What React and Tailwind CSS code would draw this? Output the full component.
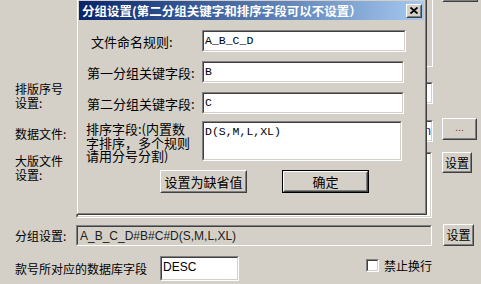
import React from "react";

const Sunken = ({ className = "", inner = "bg-white", children }) => (
    <div className={`border border-t-[#808080] border-l-[#808080] border-b-white border-r-white ${className}`}>
        <div className={`h-full w-full border border-t-[#404040] border-l-[#404040] border-b-[#d4d0c8] border-r-[#d4d0c8] overflow-hidden ${inner}`}>
            {children}
        </div>
    </div>
);

const Btn = ({ className = "", children }) => (
    <div className={`border border-t-white border-l-white border-b-[#404040] border-r-[#404040] bg-[#d4d0c8] ${className}`}>
        <div className="h-full w-full border border-t-[#d4d0c8] border-l-[#d4d0c8] border-b-[#808080] border-r-[#808080] flex items-center justify-center">
            {children}
        </div>
    </div>
);

const Field = ({ label, labelPad, width, value, rowClass }) => (
    <div className={`flex items-center h-[22px] ${rowClass}`}>
        <div className={`w-[123px] ${labelPad} leading-[13px]`}>{label}</div>
        <Sunken className={`${width} h-[22px]`}>
            <div className="h-full flex items-center pl-[1px] font-['Liberation_Mono',monospace] text-[11.5px]">{value}</div>
        </Sunken>
    </div>
);

const GroupDialog = () => (
    <div className="absolute left-[76px] top-[-2px] w-[351px] h-[217px] border border-t-[#d4d0c8] border-l-[#d4d0c8] border-b-[#404040] border-r-[#404040] bg-[#d4d0c8]">
        <div className="h-full w-full border border-t-white border-l-white border-b-[#808080] border-r-[#808080] p-[1px] text-[13px]">
            {/* title bar */}
            <div className="h-[19px] flex items-center justify-between bg-linear-to-r from-[#0a246a] to-[#a6caf0]">
                <div className="pl-[3px] text-white font-bold text-[12.5px] leading-[19px] whitespace-nowrap">分组设置(第二分组关键字和排序字段可以不设置）</div>
                <Btn className="w-[16px] h-[14px] mr-[2px]">
                    <svg width="8" height="7" viewBox="0 0 8 7">
                        <path d="M0.5 0.5 L7.5 6.5 M7.5 0.5 L0.5 6.5" stroke="#000" strokeWidth="1.8" fill="none" />
                    </svg>
                </Btn>
            </div>

            <Field label="文件命名规则:" labelPad="pl-[12px]" width="w-[204px]" value="A_B_C_D" rowClass="mt-[10px]" />
            <Field label="第一分组关键字段:" labelPad="pl-[8px]" width="w-[202px]" value="B" rowClass="mt-[9px]" />
            <Field label="第二分组关键字段:" labelPad="pl-[8px]" width="w-[202px]" value="C" rowClass="mt-[9px]" />

            <div className="flex mt-[7px] h-[40px]">
                <div className="w-[123px] pl-[7px] pt-[1px] leading-[13.5px] whitespace-nowrap">
                    排序字段:(内置数<br />字排序，多个规则<br />请用分号分割)
                </div>
                <Sunken className="w-[200px] h-[40px]">
                    <div className="pl-[1px] pt-[2px] font-['Liberation_Mono',monospace] text-[11.5px] leading-[13px]">D(S,M,L,XL)</div>
                </Sunken>
            </div>

            <div className="flex mt-[9px]">
                <Btn className="ml-[81px] w-[87px] h-[23px]">设置为缺省值</Btn>
                <div className="ml-[35px] w-[87px] h-[23px] border border-black">
                    <Btn className="w-full h-full">确定</Btn>
                </div>
            </div>
        </div>
    </div>
);

const App = () => {
    return (
        <div className="relative w-[481px] h-[284px] overflow-hidden bg-[#d4d0c8] text-black text-[12px] font-['Noto_Sans_CJK_SC','Liberation_Sans',sans-serif]">
            <div className="flex flex-col">
                {/* top edit + button */}
                <div className="flex h-[67px]">
                    <div className="w-[76px]" />
                    <div className="w-[357px] h-[67px] border-r border-b border-white">
                        <div className="h-full w-full border-r border-b border-[#d4d0c8]" />
                    </div>
                    <Btn className="ml-[9px] w-[36px] h-[24px] -mt-[22px]" />
                </div>

                {/* 排版序号设置 */}
                <div className="flex h-[38px] mt-[15px]">
                    <div className="w-[76px] pl-[15px] leading-[14px]">排版序号<br />设置:</div>
                    <Sunken className="w-[357px] h-[22px]" />
                </div>

                {/* 数据文件 */}
                <div className="flex h-[32px]">
                    <div className="w-[76px] pl-[15px] leading-[13px] pt-[7px]">数据文件:</div>
                    <Sunken className="w-[357px] h-[22px]">
                        <div className="h-full flex items-center justify-end text-[#2a2090] font-['Liberation_Sans',sans-serif] text-[12px]">n</div>
                    </Sunken>
                    <Btn className="ml-[9px] w-[35px] h-[22px] -mt-[2px]">
                        <span className="text-[#a03030] font-['Liberation_Sans',sans-serif] text-[11px] leading-none pb-[4px]">...</span>
                    </Btn>
                </div>

                {/* 大版文件设置 */}
                <div className="flex h-[73px]">
                    <div className="w-[76px] pl-[15px] leading-[14px] pt-[2px]">大版文件<br />设置:</div>
                    <Sunken className="w-[356px] h-[66px]" />
                    <Btn className="ml-[10px] w-[30px] h-[21px]">设置</Btn>
                </div>

                {/* 分组设置 */}
                <div className="flex h-[31px]">
                    <div className="w-[76px] pl-[15px] leading-[13px] pt-[4px]">分组设置:</div>
                    <Sunken className="w-[356px] h-[21px]" inner="bg-[#d4d0c8]">
                        <div className="h-full flex items-center pl-[2px] font-['Liberation_Sans',sans-serif] text-[12px] text-[#202020]">A_B_C_D#B#C#D(S,M,L,XL)</div>
                    </Sunken>
                    <Btn className="ml-[11px] w-[31px] h-[22px] -mt-[1px]">设置</Btn>
                </div>

                {/* 款号所对应的数据库字段 */}
                <div className="flex h-[28px]">
                    <div className="w-[160px] pl-[15px] leading-[13px] pt-[6px] whitespace-nowrap">款号所对应的数据库字段</div>
                    <Sunken className="w-[79px] h-[25px]">
                        <div className="h-full flex items-center pl-[1px] pb-[3px] font-['Liberation_Sans',sans-serif] text-[12px]">DESC</div>
                    </Sunken>
                    <Sunken className="ml-[127px] mt-[3px] w-[13px] h-[13px]" />
                    <div className="ml-[5px] pt-[3px] leading-[13px]">禁止换行</div>
                </div>
            </div>

            <GroupDialog />
        </div>
    );
};

export default App;
